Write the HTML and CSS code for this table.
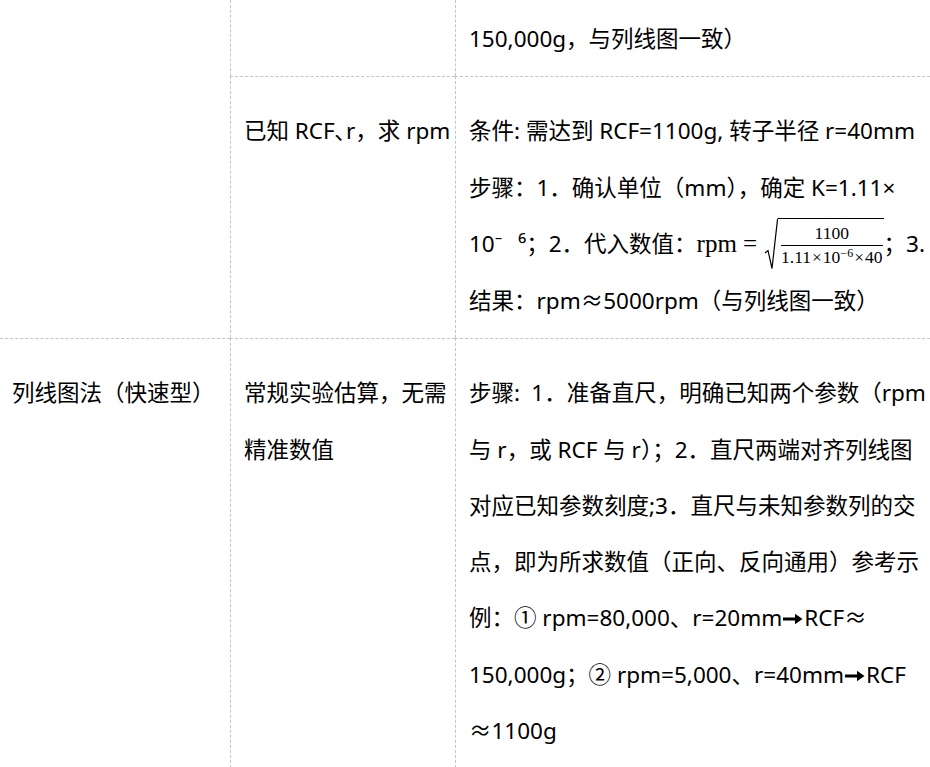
FILE: index.html
```html
<!DOCTYPE html>
<html lang="zh-CN">
<head>
<meta charset="utf-8">
<title>离心力换算方法</title>
<link rel="stylesheet" href="styles.css">
</head>
<body>
<div class="table">
  <div class="cell c1 first span2"></div>
  <div class="cell c2 first"></div>
  <div class="cell c3 first">150,000g，与列线图一致）</div>

  <div class="cell c2">已知 RCF､r，求 rpm</div>
  <div class="cell c3">条件: 需达到 RCF=1100g, 转子半径 r=40mm<br>步骤：1．确认单位（mm），确定 K=1.11×<br>10<span class="supgap">⁻</span>⁶；2．代入数值：<span class="math"><span class="mvar">rpm</span><span class="meq">=</span><span class="sqrt"><svg class="radical" viewBox="0 0 14 52" width="14" height="52"><path d="M1 35 L4 32.5 L8 50.5 L13.6 0.6"/></svg><span class="radicand"><span class="num">1100</span><span class="den">1.11<span class="times">×</span>10<sup class="msup">−6</sup><span class="times">×</span>40</span></span></span></span>；3.<br>结果：rpm≈5000rpm（与列线图一致）</div>

  <div class="cell c1">列线图法（快速型）</div>
  <div class="cell c2">常规实验估算，无需精准数值</div>
  <div class="cell c3">步骤:&ensp;1．准备直尺，明确已知两个参数（rpm<br>与 r，或 RCF 与 r）；2．直尺两端对齐列线图<br>对应已知参数刻度;3．直尺与未知参数列的交<br>点，即为所求数值（正向、反向通用）参考示<br>例：① rpm=80,000、r=20mm<svg class="arrow" viewBox="0 0 20 12" width="20" height="12"><path d="M0 4.6 H12 V0.8 L19.5 6 L12 11.2 V7.4 H0 Z"/></svg>RCF≈<br>150,000g；② rpm=5,000、r=40mm<svg class="arrow" viewBox="0 0 20 12" width="20" height="12"><path d="M0 4.6 H12 V0.8 L19.5 6 L12 11.2 V7.4 H0 Z"/></svg>RCF<br>≈1100g</div>
</div>
</body>
</html>
```

FILE: styles.css
```css
* {
  box-sizing: border-box;
}

html,
body {
  margin: 0;
  padding: 0;
  background: #ffffff;
}

body {
  width: 930px;
  height: 767px;
  overflow: hidden;
  font-family: "Noto Sans", "Noto Sans CJK SC", sans-serif;
  font-size: 22.5px;
  line-height: 56.25px;
  color: #000000;
}

.table {
  display: grid;
  grid-template-columns: 230px 225px 475px;
}

.cell {
  padding: 26px 0 9px 13px;
  border-left: 1px dashed #c4c4c4;
  border-top: 1px dashed #c4c4c4;
}

.c1 {
  border-left: none;
  padding-left: 12px;
}

.first {
  border-top: none;
  padding-top: 11px;
}

.span2 {
  grid-row: span 2;
}

.supgap {
  margin-right: 16px;
}

.arrow {
  display: inline-block;
  vertical-align: 1px;
  margin: 0 1px 0 1px;
}

.arrow path {
  fill: #000000;
}

/* formula */
.math {
  font-family: "Liberation Serif", "DejaVu Serif", serif;
}

.mvar {
  font-size: 25px;
}

.meq {
  font-size: 25px;
  margin: 0 7px 0 6px;
}

.sqrt {
  display: inline-flex;
  align-items: flex-start;
  vertical-align: top;
  margin-top: 2px;
  height: 52px;
}

.radical {
  display: block;
  flex: none;
}

.radical path {
  fill: none;
  stroke: #000000;
  stroke-width: 1.2;
  stroke-linejoin: miter;
}

.radicand {
  display: inline-flex;
  flex-direction: column;
  align-items: center;
  border-top: 1.2px solid #000000;
  padding: 2px 1px 0 3px;
  font-size: 17.5px;
}

.num {
  line-height: 24px;
  padding: 0 2px;
  align-self: stretch;
  text-align: center;
  border-bottom: 1px solid #000000;
}

.den {
  line-height: 22px;
  white-space: nowrap;
}

.times {
  margin: 0 1px;
}

.msup {
  font-size: 12px;
  line-height: 0;
  vertical-align: 6px;
}
```
